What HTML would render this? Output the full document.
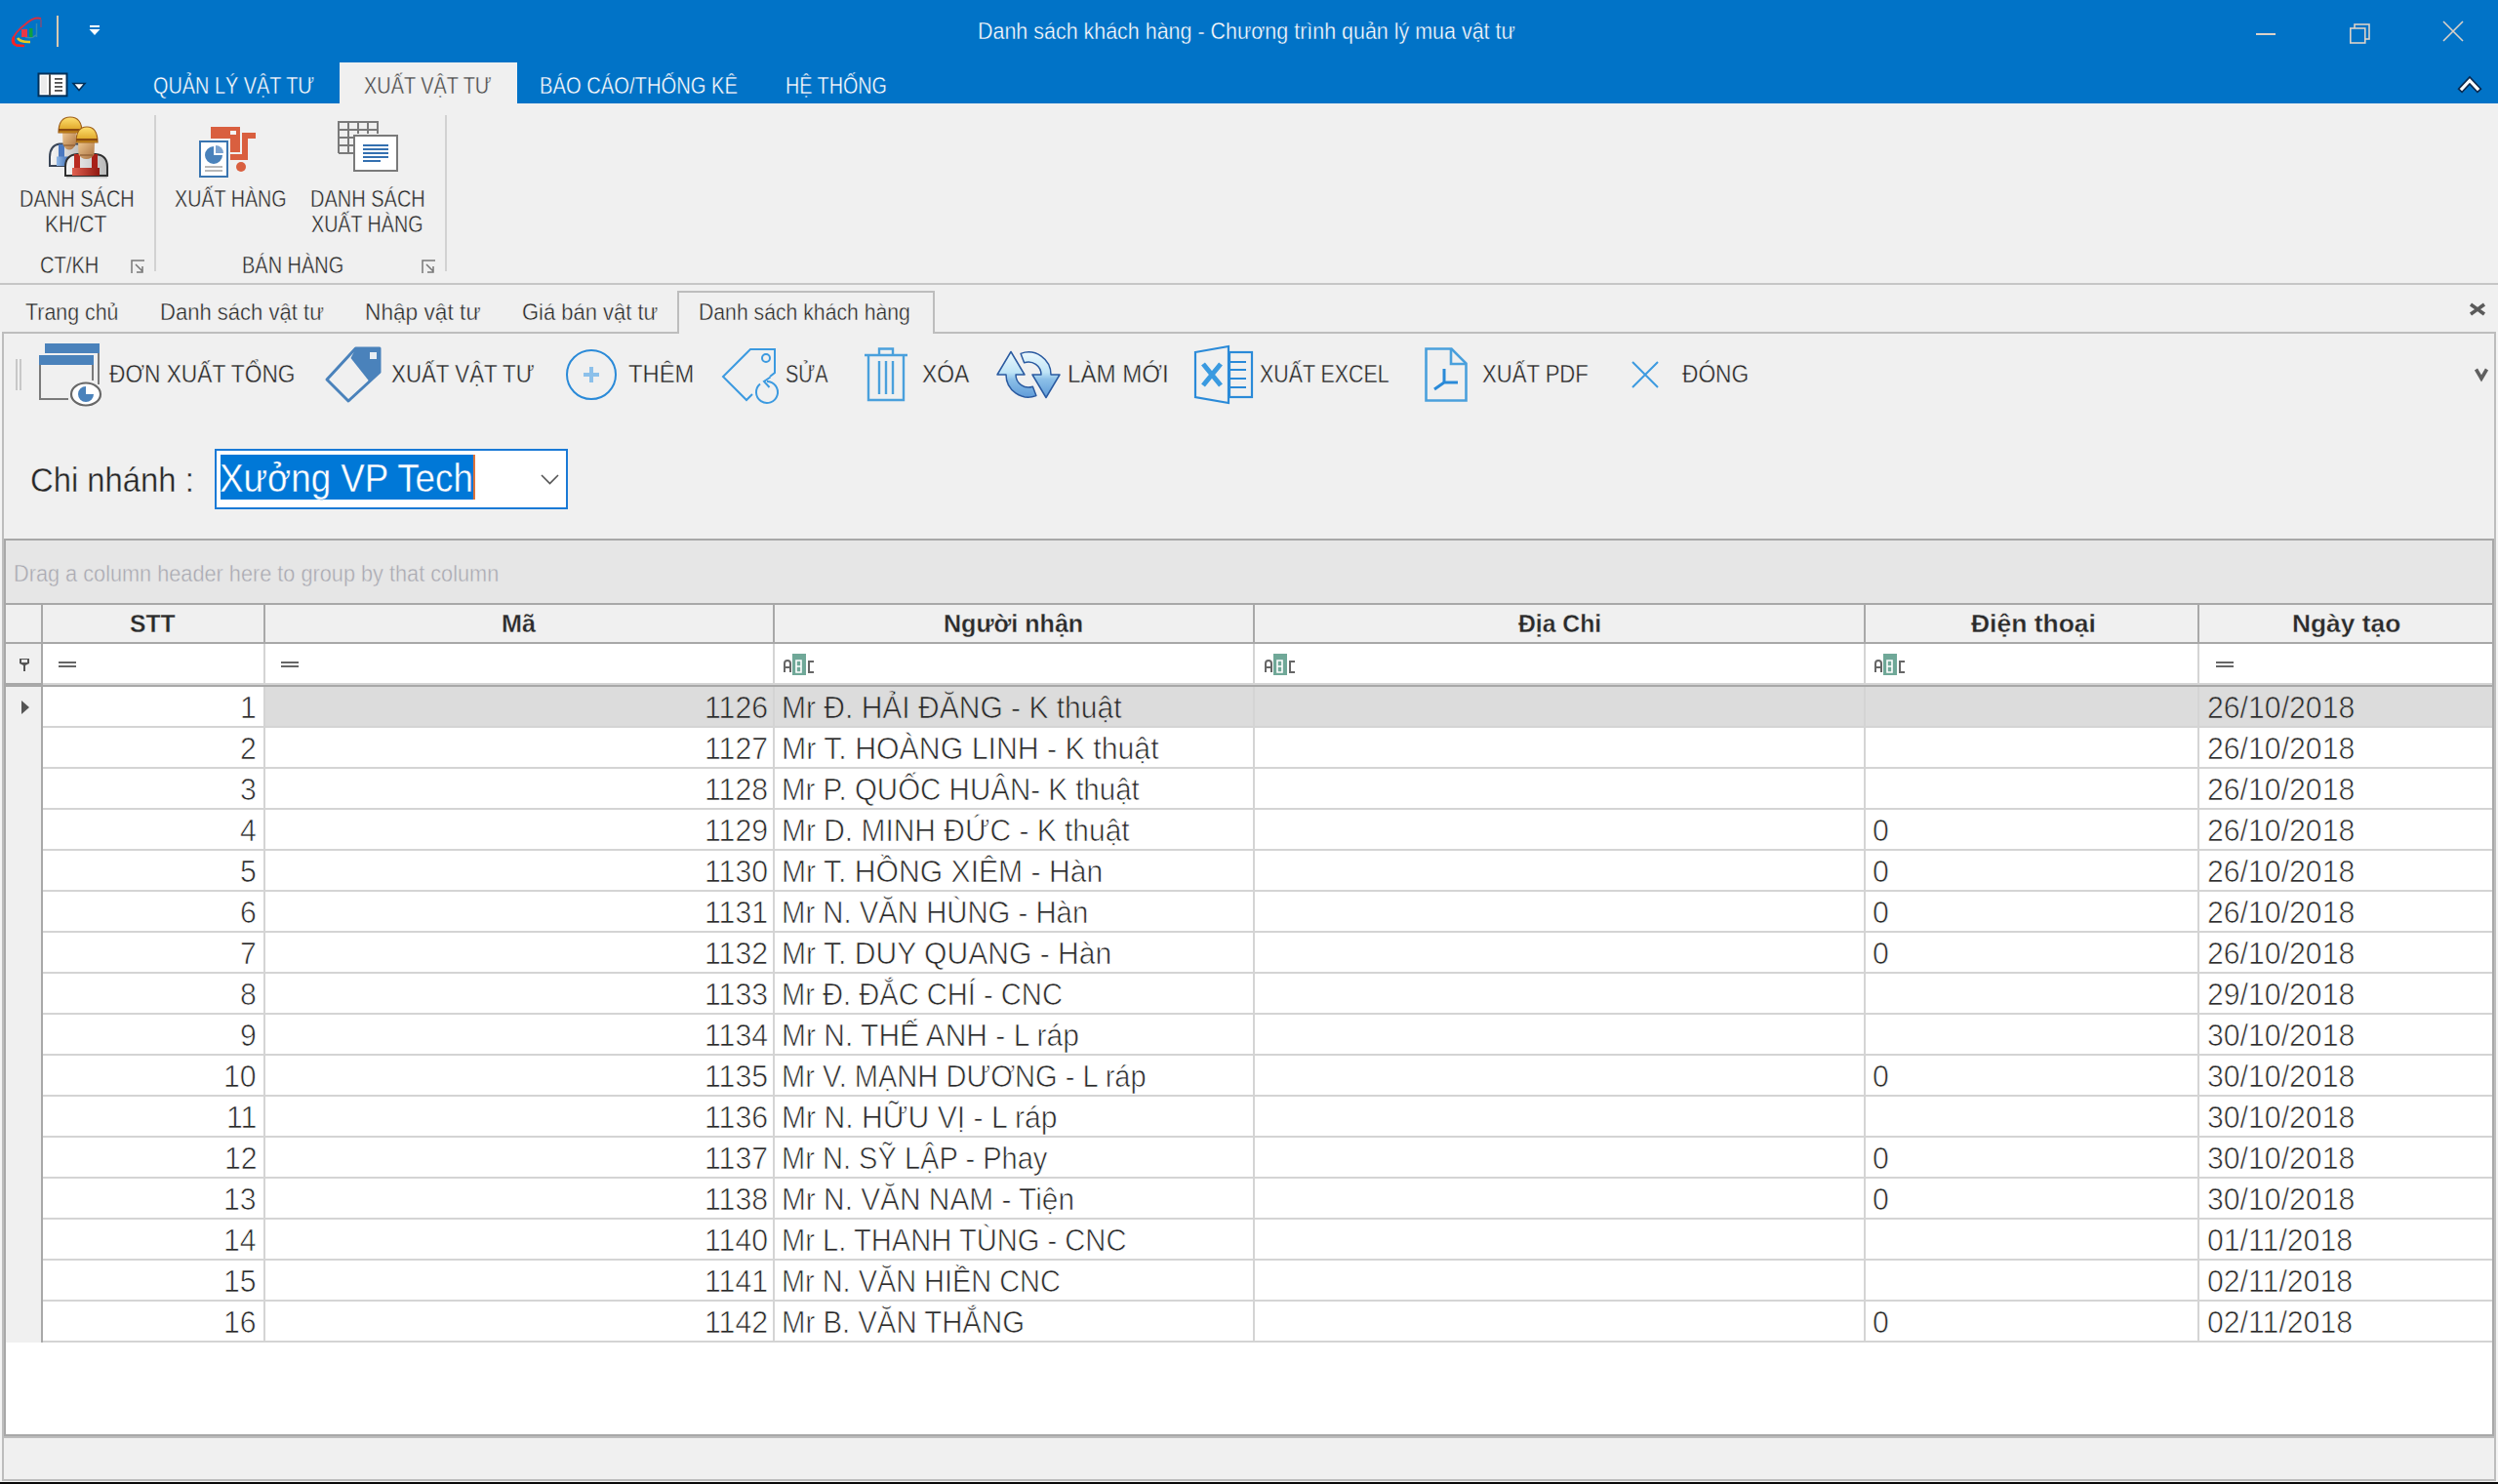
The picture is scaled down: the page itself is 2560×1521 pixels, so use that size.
<!DOCTYPE html>
<html><head><meta charset="utf-8"><title>Danh sách khách hàng</title>
<style>
html,body{margin:0;padding:0;}
body{width:2560px;height:1521px;overflow:hidden;position:relative;background:#f0f0f0;font-family:"Liberation Sans",sans-serif;}
.tx{position:absolute;white-space:pre;transform-origin:0 0;font-family:"Liberation Sans",sans-serif;}
svg{position:absolute;overflow:visible;}
</style></head><body>
<svg width="2560" height="1521" viewBox="0 0 2560 1521" style="left:0;top:0">
<g shape-rendering="crispEdges">
<!-- title bar -->
<rect x="0" y="0" width="2560" height="106" fill="#0173c7"/>
<rect x="348" y="64" width="182" height="42" fill="#f0f0f0"/>
<rect x="58" y="16" width="2" height="32" fill="#d9c9b0"/>
<!-- ribbon -->
<rect x="0" y="290" width="2560" height="2" fill="#c6c6c6"/>
<rect x="158" y="118" width="2" height="160" fill="#d2d2d2"/>
<rect x="456" y="118" width="2" height="160" fill="#d2d2d2"/>
<!-- doc tabs -->
<rect x="694" y="298" width="264" height="2" fill="#bdbdbd"/>
<rect x="694" y="298" width="2" height="44" fill="#bdbdbd"/>
<rect x="956" y="298" width="2" height="44" fill="#bdbdbd"/>
<rect x="2" y="340" width="694" height="2" fill="#bdbdbd"/>
<rect x="956" y="340" width="1602" height="2" fill="#bdbdbd"/>
<rect x="2" y="340" width="2" height="1178" fill="#bdbdbd"/>
<rect x="2556" y="340" width="2" height="1178" fill="#bdbdbd"/>
<rect x="2" y="1516" width="2556" height="2" fill="#bdbdbd"/>
<rect x="0" y="340" width="2" height="1179" fill="#f4f4f4"/>
<rect x="2558" y="340" width="2" height="1179" fill="#f4f4f4"/>
<rect x="0" y="1518" width="2560" height="1" fill="#f4f4f4"/>
<rect x="0" y="1519" width="2560" height="2" fill="#0a0a0a"/>
<!-- toolbar grip -->
<rect x="16" y="368" width="2" height="32" fill="#c8c8c8"/>
<rect x="20" y="368" width="2" height="32" fill="#c8c8c8"/>
<!-- combo -->
<rect x="220" y="460" width="362" height="62" fill="#1a7ad6"/>
<rect x="222" y="462" width="358" height="58" fill="#ffffff"/>
<rect x="226" y="466" width="259" height="46" fill="#0078d7"/>
<rect x="485" y="466" width="2" height="46" fill="#e0743a"/>
<!-- grid -->
<rect x="4" y="552" width="2552" height="921" fill="#a8a8a8"/>
<rect x="4" y="1472" width="2552" height="2" fill="#bcbcbc"/>
<rect x="6" y="554" width="2548" height="64" fill="#e6e6e6"/>
<rect x="6" y="620" width="2548" height="38" fill="#f0f0f0"/>
<rect x="6" y="660" width="2548" height="40" fill="#ffffff"/>
<rect x="6" y="660" width="36" height="40" fill="#f0f0f0"/>
<rect x="6" y="700" width="2548" height="2" fill="#d4d4d4"/>
<rect x="6" y="704" width="2548" height="766" fill="#ffffff"/>
<rect x="6" y="704" width="36" height="672" fill="#f0f0f0"/>
<rect x="272" y="704" width="2282" height="40" fill="#dcdcdc"/>
<rect x="44" y="704" width="226" height="40" fill="#ffffff"/>
<rect x="44" y="744" width="2510" height="2" fill="#d4d4d4"/>
<rect x="44" y="786" width="2510" height="2" fill="#d4d4d4"/>
<rect x="44" y="828" width="2510" height="2" fill="#d4d4d4"/>
<rect x="44" y="870" width="2510" height="2" fill="#d4d4d4"/>
<rect x="44" y="912" width="2510" height="2" fill="#d4d4d4"/>
<rect x="44" y="954" width="2510" height="2" fill="#d4d4d4"/>
<rect x="44" y="996" width="2510" height="2" fill="#d4d4d4"/>
<rect x="44" y="1038" width="2510" height="2" fill="#d4d4d4"/>
<rect x="44" y="1080" width="2510" height="2" fill="#d4d4d4"/>
<rect x="44" y="1122" width="2510" height="2" fill="#d4d4d4"/>
<rect x="44" y="1164" width="2510" height="2" fill="#d4d4d4"/>
<rect x="44" y="1206" width="2510" height="2" fill="#d4d4d4"/>
<rect x="44" y="1248" width="2510" height="2" fill="#d4d4d4"/>
<rect x="44" y="1290" width="2510" height="2" fill="#d4d4d4"/>
<rect x="44" y="1332" width="2510" height="2" fill="#d4d4d4"/>
<rect x="44" y="1374" width="2510" height="2" fill="#d4d4d4"/>
<rect x="42" y="620" width="2" height="756" fill="#a8a8a8"/>
<rect x="6" y="700" width="38" height="4" fill="#a8a8a8"/>
<rect x="44" y="702" width="2510" height="2" fill="#a8a8a8"/>
<rect x="270" y="620" width="2" height="38" fill="#a8a8a8"/>
<rect x="270" y="660" width="2" height="40" fill="#d4d4d4"/>
<rect x="270" y="704" width="2" height="672" fill="#d4d4d4"/>
<rect x="792" y="620" width="2" height="38" fill="#a8a8a8"/>
<rect x="792" y="660" width="2" height="40" fill="#d4d4d4"/>
<rect x="792" y="704" width="2" height="672" fill="#d4d4d4"/>
<rect x="1284" y="620" width="2" height="38" fill="#a8a8a8"/>
<rect x="1284" y="660" width="2" height="40" fill="#d4d4d4"/>
<rect x="1284" y="704" width="2" height="672" fill="#d4d4d4"/>
<rect x="1910" y="620" width="2" height="38" fill="#a8a8a8"/>
<rect x="1910" y="660" width="2" height="40" fill="#d4d4d4"/>
<rect x="1910" y="704" width="2" height="672" fill="#d4d4d4"/>
<rect x="2252" y="620" width="2" height="38" fill="#a8a8a8"/>
<rect x="2252" y="660" width="2" height="40" fill="#d4d4d4"/>
<rect x="2252" y="704" width="2" height="672" fill="#d4d4d4"/>
</g>
<!-- window controls -->
<rect x="2312" y="34" width="20" height="2" fill="#dcd2c8"/>
<rect x="2413" y="25" width="15" height="15" fill="none" stroke="#dcd2c8" stroke-width="1.6"/>
<rect x="2408.8" y="29" width="15" height="15" fill="#0173c7" stroke="#dcd2c8" stroke-width="1.6"/>
<path d="M2504,22 L2524,42 M2524,22 L2504,42" stroke="#dcd2c8" stroke-width="1.6"/>
<path d="M2523,91 L2531,82.5 L2539,91" fill="none" stroke="#0a2a50" stroke-width="6.5" stroke-linecap="square"/>
<path d="M2523,91 L2531,82.5 L2539,91" fill="none" stroke="#ffffff" stroke-width="3.2" stroke-linecap="square"/>
<!-- logo -->
<path d="M42,19 Q35,17 27,24 Q14,34 12.5,42 Q13,47.5 24,47" fill="none" stroke="#d83040" stroke-width="2"/>
<path d="M14,38 Q12.5,45 17,46.5 L25,47" fill="none" stroke="#ff2020" stroke-width="2.6"/>
<path d="M42,20 L42,28" stroke="#b04060" stroke-width="1.5" opacity="0.7"/>
<path d="M37.5,24 L37.5,38 M26,38 Q33,40 37,36" fill="none" stroke="#5a9aa0" stroke-width="1.5" opacity="0.6"/>
<rect x="22" y="30" width="6" height="8" fill="#e83848"/>
<rect x="30" y="29" width="3.5" height="9" fill="#10a040"/>
<path d="M18,39 Q21,43.5 31,43" fill="none" stroke="#e8c820" stroke-width="2.6"/>
<!-- QAT dropdown -->
<rect x="92" y="26" width="10" height="2" fill="#ffffff"/>
<path d="M91.5,30 L102.5,30 L97,36 Z" fill="#ffffff"/>
<!-- app menu icon -->
<rect x="39.5" y="75.5" width="29" height="22.8" fill="#ffffff" stroke="#00305a" stroke-width="2"/>
<rect x="42" y="78" width="6" height="18" fill="#ebebeb"/>
<rect x="50" y="76" width="2" height="22" fill="#505050"/>
<rect x="56" y="80" width="8" height="1.8" fill="#505050"/>
<rect x="56" y="84" width="8" height="1.8" fill="#505050"/>
<rect x="56" y="88" width="8" height="1.8" fill="#505050"/>
<rect x="56" y="92" width="8" height="1.8" fill="#505050"/>
<path d="M75,85.5 L87,85.5 L81,92.5 Z" fill="#ffffff" stroke="#00305a" stroke-width="1.6"/>
<!-- dialog launchers -->
<g fill="none" stroke="#777" stroke-width="1.5">
<path d="M135,280 L135,267 L148,267"/><path d="M139,271 L146,278 M146,273 L146,279 L140,279"/>
<path d="M433,280 L433,267 L446,267"/><path d="M437,271 L444,278 M444,273 L444,279 L438,279"/>
</g>
<!-- doc close X -->
<path d="M2532,312 L2546,322 M2546,312 L2532,322" stroke="#5a5a5a" stroke-width="3.6"/>
<!-- toolbar chevron -->
<path d="M2537.5,378.5 L2543,388 L2548.5,378.5" fill="none" stroke="#606060" stroke-width="3.6"/>
<!-- combo chevron -->
<path d="M555,487 L563.5,495.5 L572,487" fill="none" stroke="#555" stroke-width="1.6"/>
<!-- workers icon -->
<defs>
<linearGradient id="helm" x1="0" y1="0" x2="0" y2="1"><stop offset="0" stop-color="#ffe070"/><stop offset="1" stop-color="#d89a18"/></linearGradient>
<linearGradient id="face" x1="0" y1="0" x2="1" y2="1"><stop offset="0" stop-color="#f0c890"/><stop offset="1" stop-color="#a87040"/></linearGradient>
<linearGradient id="shirt" x1="0" y1="0" x2="1" y2="0"><stop offset="0" stop-color="#f8f8f8"/><stop offset="1" stop-color="#b8b8b8"/></linearGradient>
<linearGradient id="red" x1="0" y1="0" x2="1" y2="0"><stop offset="0" stop-color="#e06050"/><stop offset="1" stop-color="#901810"/></linearGradient>
<linearGradient id="blu" x1="0" y1="0" x2="1" y2="0"><stop offset="0" stop-color="#90b8e8"/><stop offset="1" stop-color="#3060a8"/></linearGradient>
<linearGradient id="rfa" x1="0" y1="0" x2="0" y2="1"><stop offset="0" stop-color="#e8f8fc"/><stop offset="0.5" stop-color="#b8e0f4"/><stop offset="1" stop-color="#6aa4dc"/></linearGradient>
</defs>
<g>
<path d="M51,170 L51,161 Q51,149 61,147.5 L80,147.5 Q84,149 84,156 L84,170 Z" fill="url(#shirt)" stroke="#3a4658" stroke-width="2"/>
<rect x="60" y="148" width="6" height="13" fill="#4a78c0"/>
<rect x="58" y="160.5" width="15" height="9.5" fill="url(#blu)"/>
<path d="M64,135 L78,135 L77.5,148 Q75,153.5 71,153.5 Q67,153.5 64.5,148 Z" fill="url(#face)"/>
<rect x="65" y="148" width="12" height="2" fill="#8a5a30" opacity="0.6"/>
<path d="M60,136 Q60,120 72,120 Q84,120 84,136 Z" fill="url(#helm)" stroke="#a06018" stroke-width="1.2"/>
<rect x="60" y="132" width="24" height="2.5" fill="#8a4a10"/>
<path d="M67,180 L67,171 Q67,159 79,158 L98,158 Q110,159 110,171 L110,180 Z" fill="url(#shirt)" stroke="#303030" stroke-width="2"/>
<rect x="76" y="158" width="6" height="14" fill="#b82a20"/>
<rect x="94" y="158" width="6" height="14" fill="#a82018"/>
<rect x="74" y="172" width="28" height="8" fill="url(#red)"/>
<path d="M80,145 L97,145 L96.5,158 Q94,163 88.5,163 Q83,163 80.5,158 Z" fill="url(#face)"/>
<rect x="82" y="158" width="13" height="2" fill="#8a5a30" opacity="0.6"/>
<path d="M78,146 Q78,130 89,130 Q100,130 100,146 Z" fill="url(#helm)" stroke="#a06018" stroke-width="1.2"/>
<rect x="78" y="142" width="22" height="2.5" fill="#8a4a10"/>
<rect x="68" y="181" width="42" height="1.5" fill="#c8c8c8"/>
</g>
<!-- xuat hang icon -->
<g fill="#d95f3f">
<path d="M216,130 L246,130 L246,156 L236,156 L236,142 L216,142 Z"/>
<path d="M248,136 L262,136 L262,142 L254,142 L254,164 L236,164 L236,158 L248,158 Z"/>
<circle cx="247" cy="171" r="5"/>
</g>
<rect x="236" y="134" width="6" height="4" fill="#f4f4f4"/>
<rect x="205" y="145" width="28" height="36" fill="#ffffff" stroke="#3a75b0" stroke-width="2"/>
<path d="M219,150 L219,159 L228,159 A9,9 0 1 1 219,150 Z" fill="#4a82bb"/>
<path d="M221,149 L221,157 L229,157 A8,8 0 0 0 221,149 Z" fill="#7ba3d0"/>
<rect x="210" y="170" width="18" height="2" fill="#b8b8b8"/>
<rect x="210" y="174" width="18" height="2" fill="#b8b8b8"/>
<!-- danh sach xuat hang icon -->
<g fill="none" stroke="#7a7a7a" stroke-width="2">
<path d="M347,157 L347,125 L387,125 L387,137 M357,125 L357,157 M367,125 L367,137 M377,125 L377,137 M347,133 L387,133 M347,141 L362,141 M347,149 L362,149 M347,157 L362,157"/>
</g>
<rect x="363" y="139" width="44" height="36" fill="#ffffff" stroke="#7a7a7a" stroke-width="2"/>
<g fill="#3470b0">
<rect x="372" y="148" width="26" height="2"/><rect x="372" y="152" width="26" height="2"/><rect x="372" y="156" width="26" height="2"/><rect x="372" y="160" width="26" height="2"/><rect x="372" y="164" width="18" height="2"/>
</g>
<!-- don xuat tong icon -->
<rect x="46" y="352" width="56" height="10" fill="#4a82bb"/>
<rect x="100" y="362" width="2" height="32" fill="#7a7a7a"/>
<rect x="40" y="364" width="56" height="10" fill="#4a82bb"/>
<path d="M41,374 L41,409 L70,409 M95,374 L95,390" fill="none" stroke="#7a7a7a" stroke-width="2"/>
<ellipse cx="88" cy="404" rx="15" ry="11.5" fill="#ffffff" stroke="#686868" stroke-width="2.2"/>
<path d="M88,396 L88,404 L96,404 A8,8 0 1 1 88,396 Z" fill="#4a82bb"/>
<!-- tag icon (xuat vat tu) -->
<path d="M364.5,357 L389,357 L389,381.5 L357,411 L335,389 Z" fill="none" stroke="#4a82bb" stroke-width="3" stroke-linejoin="round"/>
<path d="M364.5,357 L389,357 L389,381.5 L378.5,391 L359.5,367 Z" fill="#4a82bb"/>
<rect x="379" y="361" width="7" height="7" fill="#e8eef4"/>
<!-- them icon -->
<circle cx="606" cy="384" r="25" fill="none" stroke="#2a8ad8" stroke-width="2"/>
<rect x="598" y="382" width="16" height="4" fill="#8cc0ea"/>
<rect x="604" y="376" width="4" height="16" fill="#8cc0ea"/>
<!-- sua icon -->
<g fill="none" stroke="#3c9ae0" stroke-width="2">
<path d="M789,386 L794,382 L794,358 L769,358 L741,386 L765,410 L771,404"/>
<circle cx="785" cy="367" r="4"/>
<path d="M786,391 A11,11 0 1 1 779,393.5"/>
<path d="M789.5,386.5 L783,391 L788.5,397"/>
</g>
<!-- trash icon -->
<g fill="none" stroke="#4aa0dc" stroke-width="2.4">
<path d="M886,364 L930,364"/>
<path d="M901,363 L901,357.5 L915,357.5 L915,363"/>
<path d="M890,365 L890,410 L926,410 L926,365"/>
<path d="M901,370 L901,404 M908,370 L908,404 M915,370 L915,404"/>
</g>
<!-- refresh icon -->
<linearGradient id="rfb" gradientUnits="userSpaceOnUse" x1="0" y1="360" x2="0" y2="408"><stop offset="0" stop-color="#eefafe"/><stop offset="0.45" stop-color="#bfe4f6"/><stop offset="0.6" stop-color="#8cc0e8"/><stop offset="1" stop-color="#5e9ad8"/></linearGradient>
<g stroke="#2a5aa0" stroke-width="1.5" stroke-linejoin="round" fill="url(#rfb)">
<path d="M1036,360.5 L1050,384 L1041,384 A13,13 0 0 0 1058.4,396.2 L1061.9,405.6 A23,23 0 0 1 1031,384 L1022,384 Z"/>
<path d="M1072,407.5 L1058,384 L1067,384 A13,13 0 0 0 1049.6,371.8 L1046.1,362.4 A23,23 0 0 1 1077,384 L1086,384 Z"/>
</g>
<!-- excel icon -->
<g fill="none" stroke="#2a8ad8" stroke-width="2.2">
<path d="M1225,361 L1259,355 L1259,413 L1225,407 Z"/>
<rect x="1260" y="361" width="23" height="46"/>
<path d="M1260,371 L1277,371 M1260,379 L1277,379 M1260,388 L1277,388 M1260,397 L1277,397"/>
</g>
<path d="M1233,373 L1251,395 M1251,373 L1233,395" stroke="#3a9ae0" stroke-width="5"/>
<!-- pdf icon -->
<g fill="none" stroke="#4aa0dc" stroke-width="2.6">
<path d="M1461.5,357.5 L1487.5,357.5 L1502.5,372.5 L1502.5,410.5 L1461.5,410.5 Z"/>
<path d="M1487,358 L1487,373 L1502,373"/>
</g>
<g fill="none" stroke="#2a8ad8" stroke-width="3">
<path d="M1480,378 L1480,392 L1494,392 M1480,392 L1470,399"/>
</g>
<!-- dong X -->
<path d="M1673,371 L1699,397 M1699,371 L1673,397" stroke="#3c9ae0" stroke-width="2"/>
<!-- filter row icons -->
<g fill="#666">
<rect x="60" y="678" width="18" height="2"/><rect x="60" y="682" width="18" height="2"/>
<rect x="288" y="678" width="18" height="2"/><rect x="288" y="682" width="18" height="2"/>
<rect x="2271" y="678" width="18" height="2"/><rect x="2271" y="682" width="18" height="2"/>
</g>
<g transform="translate(803,670)">
<path d="M1,19 L1,10 Q1,7 4,7 Q7,7 7,10 L7,19 M1,14 L7,14" fill="none" stroke="#666" stroke-width="2"/>
<rect x="9" y="0" width="14" height="22" fill="#70a898"/>
<path d="M13,7 L18,7 L18,13 L13,13 Z M13,13 L18,13 L18,19 L13,19 Z" fill="none" stroke="#ffffff" stroke-width="1.6"/>
<path d="M31,8 L26,8 L26,19 L31,19" fill="none" stroke="#666" stroke-width="2"/>
</g>
<g transform="translate(1296,670)">
<path d="M1,19 L1,10 Q1,7 4,7 Q7,7 7,10 L7,19 M1,14 L7,14" fill="none" stroke="#666" stroke-width="2"/>
<rect x="9" y="0" width="14" height="22" fill="#70a898"/>
<path d="M13,7 L18,7 L18,13 L13,13 Z M13,13 L18,13 L18,19 L13,19 Z" fill="none" stroke="#ffffff" stroke-width="1.6"/>
<path d="M31,8 L26,8 L26,19 L31,19" fill="none" stroke="#666" stroke-width="2"/>
</g>
<g transform="translate(1921,670)">
<path d="M1,19 L1,10 Q1,7 4,7 Q7,7 7,10 L7,19 M1,14 L7,14" fill="none" stroke="#666" stroke-width="2"/>
<rect x="9" y="0" width="14" height="22" fill="#70a898"/>
<path d="M13,7 L18,7 L18,13 L13,13 Z M13,13 L18,13 L18,19 L13,19 Z" fill="none" stroke="#ffffff" stroke-width="1.6"/>
<path d="M31,8 L26,8 L26,19 L31,19" fill="none" stroke="#666" stroke-width="2"/>
</g>
<!-- filter pin -->
<path d="M20,675 L30,675 L30,680 L26,682 L26,688 L24,688 L24,682 L20,680 Z" fill="#555"/>
<rect x="22" y="676" width="6" height="3" fill="#e8e8e8"/>
<!-- row indicator -->
<path d="M22,718 L30,725 L22,732 Z" fill="#555"/>

</svg>

<div class='tx' style='left:1002.15px;top:21px;font-size:23.25px;line-height:23.25px;font-weight:normal;color:#ffffff;-webkit-text-stroke:0.4px #0173c7;transform:scaleX(0.9227)'>Danh sách khách hàng - Chương trình quản lý mua vật tư</div>
<div class='tx' style='left:157.15px;top:77px;font-size:23.25px;line-height:23.25px;font-weight:normal;color:#ffffff;-webkit-text-stroke:0.4px #0173c7;transform:scaleX(0.8542)'>QUẢN LÝ VẬT TƯ</div>
<div class='tx' style='left:373.14px;top:77px;font-size:23.25px;line-height:23.25px;font-weight:normal;color:#444444;-webkit-text-stroke:0.4px #f0f0f0;transform:scaleX(0.8556)'>XUẤT VẬT TƯ</div>
<div class='tx' style='left:553.26px;top:77px;font-size:23.25px;line-height:23.25px;font-weight:normal;color:#ffffff;-webkit-text-stroke:0.4px #0173c7;transform:scaleX(0.8684)'>BÁO CÁO/THỐNG KÊ</div>
<div class='tx' style='left:805.30px;top:77px;font-size:23.25px;line-height:23.25px;font-weight:normal;color:#ffffff;-webkit-text-stroke:0.4px #0173c7;transform:scaleX(0.8504)'>HỆ THỐNG</div>
<div class='tx' style='left:19.78px;top:193px;font-size:23.25px;line-height:23.25px;font-weight:normal;color:#262626;-webkit-text-stroke:0.4px #f0f0f0;transform:scaleX(0.8604)'>DANH SÁCH</div>
<div class='tx' style='left:46.18px;top:219px;font-size:23.25px;line-height:23.25px;font-weight:normal;color:#262626;-webkit-text-stroke:0.4px #f0f0f0;transform:scaleX(0.9088)'>KH/CT</div>
<div class='tx' style='left:178.85px;top:193px;font-size:23.25px;line-height:23.25px;font-weight:normal;color:#262626;-webkit-text-stroke:0.4px #f0f0f0;transform:scaleX(0.8481)'>XUẤT HÀNG</div>
<div class='tx' style='left:317.68px;top:193px;font-size:23.25px;line-height:23.25px;font-weight:normal;color:#262626;-webkit-text-stroke:0.4px #f0f0f0;transform:scaleX(0.8604)'>DANH SÁCH</div>
<div class='tx' style='left:318.55px;top:219px;font-size:23.25px;line-height:23.25px;font-weight:normal;color:#262626;-webkit-text-stroke:0.4px #f0f0f0;transform:scaleX(0.8466)'>XUẤT HÀNG</div>
<div class='tx' style='left:41.13px;top:261px;font-size:23.25px;line-height:23.25px;font-weight:normal;color:#262626;-webkit-text-stroke:0.4px #f0f0f0;transform:scaleX(0.8657)'>CT/KH</div>
<div class='tx' style='left:247.68px;top:261px;font-size:23.25px;line-height:23.25px;font-weight:normal;color:#262626;-webkit-text-stroke:0.4px #f0f0f0;transform:scaleX(0.8585)'>BÁN HÀNG</div>
<div class='tx' style='left:26.00px;top:309px;font-size:23.25px;line-height:23.25px;font-weight:normal;color:#262626;-webkit-text-stroke:0.4px #f0f0f0;transform:scaleX(0.9194)'>Trang chủ</div>
<div class='tx' style='left:163.70px;top:309px;font-size:23.25px;line-height:23.25px;font-weight:normal;color:#262626;-webkit-text-stroke:0.4px #f0f0f0;transform:scaleX(0.9480)'>Danh sách vật tư</div>
<div class='tx' style='left:373.65px;top:309px;font-size:23.25px;line-height:23.25px;font-weight:normal;color:#262626;-webkit-text-stroke:0.4px #f0f0f0;transform:scaleX(0.9756)'>Nhập vật tư</div>
<div class='tx' style='left:534.75px;top:309px;font-size:23.25px;line-height:23.25px;font-weight:normal;color:#262626;-webkit-text-stroke:0.4px #f0f0f0;transform:scaleX(0.9452)'>Giá bán vật tư</div>
<div class='tx' style='left:715.88px;top:309px;font-size:23.25px;line-height:23.25px;font-weight:normal;color:#262626;-webkit-text-stroke:0.4px #f0f0f0;transform:scaleX(0.9119)'>Danh sách khách hàng</div>
<div class='tx' style='left:112.40px;top:370px;font-size:26.25px;line-height:26.25px;font-weight:normal;color:#262626;-webkit-text-stroke:0.4px #f0f0f0;transform:scaleX(0.8665)'>ĐƠN XUẤT TỔNG</div>
<div class='tx' style='left:401.15px;top:370px;font-size:26.25px;line-height:26.25px;font-weight:normal;color:#262626;-webkit-text-stroke:0.4px #f0f0f0;transform:scaleX(0.8497)'>XUẤT VẬT TƯ</div>
<div class='tx' style='left:644.00px;top:370px;font-size:26.25px;line-height:26.25px;font-weight:normal;color:#262626;-webkit-text-stroke:0.4px #f0f0f0;transform:scaleX(0.9041)'>THÊM</div>
<div class='tx' style='left:805.24px;top:370px;font-size:26.25px;line-height:26.25px;font-weight:normal;color:#262626;-webkit-text-stroke:0.4px #f0f0f0;transform:scaleX(0.7596)'>SỬA</div>
<div class='tx' style='left:944.93px;top:370px;font-size:26.25px;line-height:26.25px;font-weight:normal;color:#262626;-webkit-text-stroke:0.4px #f0f0f0;transform:scaleX(0.8727)'>XÓA</div>
<div class='tx' style='left:1093.77px;top:370px;font-size:26.25px;line-height:26.25px;font-weight:normal;color:#262626;-webkit-text-stroke:0.4px #f0f0f0;transform:scaleX(0.9174)'>LÀM MỚI</div>
<div class='tx' style='left:1291.19px;top:370px;font-size:26.25px;line-height:26.25px;font-weight:normal;color:#262626;-webkit-text-stroke:0.4px #f0f0f0;transform:scaleX(0.8137)'>XUẤT EXCEL</div>
<div class='tx' style='left:1519.16px;top:370px;font-size:26.25px;line-height:26.25px;font-weight:normal;color:#262626;-webkit-text-stroke:0.4px #f0f0f0;transform:scaleX(0.8414)'>XUẤT PDF</div>
<div class='tx' style='left:1724.40px;top:370px;font-size:26.25px;line-height:26.25px;font-weight:normal;color:#262626;-webkit-text-stroke:0.4px #f0f0f0;transform:scaleX(0.8649)'>ĐÓNG</div>
<div class='tx' style='left:31.06px;top:474px;font-size:35.0px;line-height:35.0px;font-weight:normal;color:#262626;-webkit-text-stroke:0.4px #f0f0f0;transform:scaleX(0.9371)'>Chi nhánh :</div>
<div class='tx' style='left:225.10px;top:470px;font-size:40.75px;line-height:40.75px;font-weight:normal;color:#ffffff;-webkit-text-stroke:0.4px #0078d7;transform:scaleX(0.9018)'>Xưởng VP Tech</div>
<div class='tx' style='left:14.13px;top:577px;font-size:23.25px;line-height:23.25px;font-weight:normal;color:#a8a8b0;-webkit-text-stroke:0.4px #e6e6e6;transform:scaleX(0.9338)'>Drag a column header here to group by that column</div>
<div class='tx' style='left:133.06px;top:626px;font-size:26.25px;line-height:26.25px;font-weight:bold;color:#2a2a2a;-webkit-text-stroke:0.3px #f0f0f0;transform:scaleX(0.9388)'>STT</div>
<div class='tx' style='left:514.04px;top:626px;font-size:26.25px;line-height:26.25px;font-weight:bold;color:#2a2a2a;-webkit-text-stroke:0.3px #f0f0f0;transform:scaleX(0.9583)'>Mã</div>
<div class='tx' style='left:967.05px;top:626px;font-size:26.25px;line-height:26.25px;font-weight:bold;color:#2a2a2a;-webkit-text-stroke:0.3px #f0f0f0;transform:scaleX(0.9547)'>Người nhận</div>
<div class='tx' style='left:1556.40px;top:626px;font-size:26.25px;line-height:26.25px;font-weight:bold;color:#2a2a2a;-webkit-text-stroke:0.3px #f0f0f0;transform:scaleX(0.9416)'>Địa Chi</div>
<div class='tx' style='left:2020.00px;top:626px;font-size:26.25px;line-height:26.25px;font-weight:bold;color:#2a2a2a;-webkit-text-stroke:0.3px #f0f0f0;transform:scaleX(1.0080)'>Điện thoại</div>
<div class='tx' style='left:2349.30px;top:626px;font-size:26.25px;line-height:26.25px;font-weight:bold;color:#2a2a2a;-webkit-text-stroke:0.3px #f0f0f0;transform:scaleX(1.0037)'>Ngày tạo</div>
<div class='tx' style='left:245.94px;top:709px;font-size:32.0px;line-height:32.0px;font-weight:normal;color:#2a2a2a;-webkit-text-stroke:0.7px #ffffff;transform:scaleX(0.9446)'>1</div>
<div class='tx' style='left:721.77px;top:709px;font-size:32.0px;line-height:32.0px;font-weight:normal;color:#2a2a2a;-webkit-text-stroke:0.7px #dcdcdc;transform:scaleX(0.9446)'>1126</div>
<div class='tx' style='left:801.12px;top:709px;font-size:32.0px;line-height:32.0px;font-weight:normal;color:#2a2a2a;-webkit-text-stroke:0.7px #dcdcdc;transform:scaleX(0.9378)'>Mr Đ. HẢI ĐĂNG - K thuật</div>
<div class='tx' style='left:2262.26px;top:709px;font-size:32.0px;line-height:32.0px;font-weight:normal;color:#2a2a2a;-webkit-text-stroke:0.7px #dcdcdc;transform:scaleX(0.9446)'>26/10/2018</div>
<div class='tx' style='left:245.94px;top:751px;font-size:32.0px;line-height:32.0px;font-weight:normal;color:#2a2a2a;-webkit-text-stroke:0.7px #ffffff;transform:scaleX(0.9446)'>2</div>
<div class='tx' style='left:721.77px;top:751px;font-size:32.0px;line-height:32.0px;font-weight:normal;color:#2a2a2a;-webkit-text-stroke:0.7px #ffffff;transform:scaleX(0.9446)'>1127</div>
<div class='tx' style='left:801.11px;top:751px;font-size:32.0px;line-height:32.0px;font-weight:normal;color:#2a2a2a;-webkit-text-stroke:0.7px #ffffff;transform:scaleX(0.9467)'>Mr T. HOÀNG LINH - K thuật</div>
<div class='tx' style='left:2262.26px;top:751px;font-size:32.0px;line-height:32.0px;font-weight:normal;color:#2a2a2a;-webkit-text-stroke:0.7px #ffffff;transform:scaleX(0.9446)'>26/10/2018</div>
<div class='tx' style='left:245.94px;top:793px;font-size:32.0px;line-height:32.0px;font-weight:normal;color:#2a2a2a;-webkit-text-stroke:0.7px #ffffff;transform:scaleX(0.9446)'>3</div>
<div class='tx' style='left:721.77px;top:793px;font-size:32.0px;line-height:32.0px;font-weight:normal;color:#2a2a2a;-webkit-text-stroke:0.7px #ffffff;transform:scaleX(0.9446)'>1128</div>
<div class='tx' style='left:801.16px;top:793px;font-size:32.0px;line-height:32.0px;font-weight:normal;color:#2a2a2a;-webkit-text-stroke:0.7px #ffffff;transform:scaleX(0.9222)'>Mr P. QUỐC HUÂN- K thuật</div>
<div class='tx' style='left:2262.26px;top:793px;font-size:32.0px;line-height:32.0px;font-weight:normal;color:#2a2a2a;-webkit-text-stroke:0.7px #ffffff;transform:scaleX(0.9446)'>26/10/2018</div>
<div class='tx' style='left:245.94px;top:835px;font-size:32.0px;line-height:32.0px;font-weight:normal;color:#2a2a2a;-webkit-text-stroke:0.7px #ffffff;transform:scaleX(0.9446)'>4</div>
<div class='tx' style='left:721.77px;top:835px;font-size:32.0px;line-height:32.0px;font-weight:normal;color:#2a2a2a;-webkit-text-stroke:0.7px #ffffff;transform:scaleX(0.9446)'>1129</div>
<div class='tx' style='left:801.13px;top:835px;font-size:32.0px;line-height:32.0px;font-weight:normal;color:#2a2a2a;-webkit-text-stroke:0.7px #ffffff;transform:scaleX(0.9356)'>Mr D. MINH ĐỨC - K thuật</div>
<div class='tx' style='left:1919.06px;top:835px;font-size:32.0px;line-height:32.0px;font-weight:normal;color:#2a2a2a;-webkit-text-stroke:0.7px #ffffff;transform:scaleX(0.9446)'>0</div>
<div class='tx' style='left:2262.26px;top:835px;font-size:32.0px;line-height:32.0px;font-weight:normal;color:#2a2a2a;-webkit-text-stroke:0.7px #ffffff;transform:scaleX(0.9446)'>26/10/2018</div>
<div class='tx' style='left:245.94px;top:877px;font-size:32.0px;line-height:32.0px;font-weight:normal;color:#2a2a2a;-webkit-text-stroke:0.7px #ffffff;transform:scaleX(0.9446)'>5</div>
<div class='tx' style='left:721.77px;top:877px;font-size:32.0px;line-height:32.0px;font-weight:normal;color:#2a2a2a;-webkit-text-stroke:0.7px #ffffff;transform:scaleX(0.9446)'>1130</div>
<div class='tx' style='left:801.12px;top:877px;font-size:32.0px;line-height:32.0px;font-weight:normal;color:#2a2a2a;-webkit-text-stroke:0.7px #ffffff;transform:scaleX(0.9416)'>Mr T. HỒNG XIÊM - Hàn</div>
<div class='tx' style='left:1919.06px;top:877px;font-size:32.0px;line-height:32.0px;font-weight:normal;color:#2a2a2a;-webkit-text-stroke:0.7px #ffffff;transform:scaleX(0.9446)'>0</div>
<div class='tx' style='left:2262.26px;top:877px;font-size:32.0px;line-height:32.0px;font-weight:normal;color:#2a2a2a;-webkit-text-stroke:0.7px #ffffff;transform:scaleX(0.9446)'>26/10/2018</div>
<div class='tx' style='left:245.94px;top:919px;font-size:32.0px;line-height:32.0px;font-weight:normal;color:#2a2a2a;-webkit-text-stroke:0.7px #ffffff;transform:scaleX(0.9446)'>6</div>
<div class='tx' style='left:721.77px;top:919px;font-size:32.0px;line-height:32.0px;font-weight:normal;color:#2a2a2a;-webkit-text-stroke:0.7px #ffffff;transform:scaleX(0.9446)'>1131</div>
<div class='tx' style='left:801.17px;top:919px;font-size:32.0px;line-height:32.0px;font-weight:normal;color:#2a2a2a;-webkit-text-stroke:0.7px #ffffff;transform:scaleX(0.9156)'>Mr N. VĂN HÙNG - Hàn</div>
<div class='tx' style='left:1919.06px;top:919px;font-size:32.0px;line-height:32.0px;font-weight:normal;color:#2a2a2a;-webkit-text-stroke:0.7px #ffffff;transform:scaleX(0.9446)'>0</div>
<div class='tx' style='left:2262.26px;top:919px;font-size:32.0px;line-height:32.0px;font-weight:normal;color:#2a2a2a;-webkit-text-stroke:0.7px #ffffff;transform:scaleX(0.9446)'>26/10/2018</div>
<div class='tx' style='left:245.94px;top:961px;font-size:32.0px;line-height:32.0px;font-weight:normal;color:#2a2a2a;-webkit-text-stroke:0.7px #ffffff;transform:scaleX(0.9446)'>7</div>
<div class='tx' style='left:721.77px;top:961px;font-size:32.0px;line-height:32.0px;font-weight:normal;color:#2a2a2a;-webkit-text-stroke:0.7px #ffffff;transform:scaleX(0.9446)'>1132</div>
<div class='tx' style='left:801.12px;top:961px;font-size:32.0px;line-height:32.0px;font-weight:normal;color:#2a2a2a;-webkit-text-stroke:0.7px #ffffff;transform:scaleX(0.9404)'>Mr T. DUY QUANG - Hàn</div>
<div class='tx' style='left:1919.06px;top:961px;font-size:32.0px;line-height:32.0px;font-weight:normal;color:#2a2a2a;-webkit-text-stroke:0.7px #ffffff;transform:scaleX(0.9446)'>0</div>
<div class='tx' style='left:2262.26px;top:961px;font-size:32.0px;line-height:32.0px;font-weight:normal;color:#2a2a2a;-webkit-text-stroke:0.7px #ffffff;transform:scaleX(0.9446)'>26/10/2018</div>
<div class='tx' style='left:245.94px;top:1003px;font-size:32.0px;line-height:32.0px;font-weight:normal;color:#2a2a2a;-webkit-text-stroke:0.7px #ffffff;transform:scaleX(0.9446)'>8</div>
<div class='tx' style='left:721.77px;top:1003px;font-size:32.0px;line-height:32.0px;font-weight:normal;color:#2a2a2a;-webkit-text-stroke:0.7px #ffffff;transform:scaleX(0.9446)'>1133</div>
<div class='tx' style='left:801.18px;top:1003px;font-size:32.0px;line-height:32.0px;font-weight:normal;color:#2a2a2a;-webkit-text-stroke:0.7px #ffffff;transform:scaleX(0.9099)'>Mr Đ. ĐẮC CHÍ - CNC</div>
<div class='tx' style='left:2262.26px;top:1003px;font-size:32.0px;line-height:32.0px;font-weight:normal;color:#2a2a2a;-webkit-text-stroke:0.7px #ffffff;transform:scaleX(0.9446)'>29/10/2018</div>
<div class='tx' style='left:245.94px;top:1045px;font-size:32.0px;line-height:32.0px;font-weight:normal;color:#2a2a2a;-webkit-text-stroke:0.7px #ffffff;transform:scaleX(0.9446)'>9</div>
<div class='tx' style='left:721.77px;top:1045px;font-size:32.0px;line-height:32.0px;font-weight:normal;color:#2a2a2a;-webkit-text-stroke:0.7px #ffffff;transform:scaleX(0.9446)'>1134</div>
<div class='tx' style='left:801.13px;top:1045px;font-size:32.0px;line-height:32.0px;font-weight:normal;color:#2a2a2a;-webkit-text-stroke:0.7px #ffffff;transform:scaleX(0.9370)'>Mr N. THẾ ANH - L ráp</div>
<div class='tx' style='left:2262.26px;top:1045px;font-size:32.0px;line-height:32.0px;font-weight:normal;color:#2a2a2a;-webkit-text-stroke:0.7px #ffffff;transform:scaleX(0.9446)'>30/10/2018</div>
<div class='tx' style='left:228.94px;top:1087px;font-size:32.0px;line-height:32.0px;font-weight:normal;color:#2a2a2a;-webkit-text-stroke:0.7px #ffffff;transform:scaleX(0.9446)'>10</div>
<div class='tx' style='left:721.77px;top:1087px;font-size:32.0px;line-height:32.0px;font-weight:normal;color:#2a2a2a;-webkit-text-stroke:0.7px #ffffff;transform:scaleX(0.9446)'>1135</div>
<div class='tx' style='left:801.18px;top:1087px;font-size:32.0px;line-height:32.0px;font-weight:normal;color:#2a2a2a;-webkit-text-stroke:0.7px #ffffff;transform:scaleX(0.9078)'>Mr V. MẠNH DƯƠNG - L ráp</div>
<div class='tx' style='left:1919.06px;top:1087px;font-size:32.0px;line-height:32.0px;font-weight:normal;color:#2a2a2a;-webkit-text-stroke:0.7px #ffffff;transform:scaleX(0.9446)'>0</div>
<div class='tx' style='left:2262.26px;top:1087px;font-size:32.0px;line-height:32.0px;font-weight:normal;color:#2a2a2a;-webkit-text-stroke:0.7px #ffffff;transform:scaleX(0.9446)'>30/10/2018</div>
<div class='tx' style='left:231.77px;top:1129px;font-size:32.0px;line-height:32.0px;font-weight:normal;color:#2a2a2a;-webkit-text-stroke:0.7px #ffffff;transform:scaleX(0.9446)'>11</div>
<div class='tx' style='left:721.77px;top:1129px;font-size:32.0px;line-height:32.0px;font-weight:normal;color:#2a2a2a;-webkit-text-stroke:0.7px #ffffff;transform:scaleX(0.9446)'>1136</div>
<div class='tx' style='left:801.12px;top:1129px;font-size:32.0px;line-height:32.0px;font-weight:normal;color:#2a2a2a;-webkit-text-stroke:0.7px #ffffff;transform:scaleX(0.9418)'>Mr N. HỮU VỊ - L ráp</div>
<div class='tx' style='left:2262.26px;top:1129px;font-size:32.0px;line-height:32.0px;font-weight:normal;color:#2a2a2a;-webkit-text-stroke:0.7px #ffffff;transform:scaleX(0.9446)'>30/10/2018</div>
<div class='tx' style='left:229.89px;top:1171px;font-size:32.0px;line-height:32.0px;font-weight:normal;color:#2a2a2a;-webkit-text-stroke:0.7px #ffffff;transform:scaleX(0.9446)'>12</div>
<div class='tx' style='left:721.77px;top:1171px;font-size:32.0px;line-height:32.0px;font-weight:normal;color:#2a2a2a;-webkit-text-stroke:0.7px #ffffff;transform:scaleX(0.9446)'>1137</div>
<div class='tx' style='left:801.18px;top:1171px;font-size:32.0px;line-height:32.0px;font-weight:normal;color:#2a2a2a;-webkit-text-stroke:0.7px #ffffff;transform:scaleX(0.9081)'>Mr N. SỸ LẬP - Phay</div>
<div class='tx' style='left:1919.06px;top:1171px;font-size:32.0px;line-height:32.0px;font-weight:normal;color:#2a2a2a;-webkit-text-stroke:0.7px #ffffff;transform:scaleX(0.9446)'>0</div>
<div class='tx' style='left:2262.26px;top:1171px;font-size:32.0px;line-height:32.0px;font-weight:normal;color:#2a2a2a;-webkit-text-stroke:0.7px #ffffff;transform:scaleX(0.9446)'>30/10/2018</div>
<div class='tx' style='left:228.94px;top:1213px;font-size:32.0px;line-height:32.0px;font-weight:normal;color:#2a2a2a;-webkit-text-stroke:0.7px #ffffff;transform:scaleX(0.9446)'>13</div>
<div class='tx' style='left:721.77px;top:1213px;font-size:32.0px;line-height:32.0px;font-weight:normal;color:#2a2a2a;-webkit-text-stroke:0.7px #ffffff;transform:scaleX(0.9446)'>1138</div>
<div class='tx' style='left:801.14px;top:1213px;font-size:32.0px;line-height:32.0px;font-weight:normal;color:#2a2a2a;-webkit-text-stroke:0.7px #ffffff;transform:scaleX(0.9324)'>Mr N. VĂN NAM - Tiện</div>
<div class='tx' style='left:1919.06px;top:1213px;font-size:32.0px;line-height:32.0px;font-weight:normal;color:#2a2a2a;-webkit-text-stroke:0.7px #ffffff;transform:scaleX(0.9446)'>0</div>
<div class='tx' style='left:2262.26px;top:1213px;font-size:32.0px;line-height:32.0px;font-weight:normal;color:#2a2a2a;-webkit-text-stroke:0.7px #ffffff;transform:scaleX(0.9446)'>30/10/2018</div>
<div class='tx' style='left:228.94px;top:1255px;font-size:32.0px;line-height:32.0px;font-weight:normal;color:#2a2a2a;-webkit-text-stroke:0.7px #ffffff;transform:scaleX(0.9446)'>14</div>
<div class='tx' style='left:721.77px;top:1255px;font-size:32.0px;line-height:32.0px;font-weight:normal;color:#2a2a2a;-webkit-text-stroke:0.7px #ffffff;transform:scaleX(0.9446)'>1140</div>
<div class='tx' style='left:801.18px;top:1255px;font-size:32.0px;line-height:32.0px;font-weight:normal;color:#2a2a2a;-webkit-text-stroke:0.7px #ffffff;transform:scaleX(0.9106)'>Mr L. THANH TÙNG - CNC</div>
<div class='tx' style='left:2262.26px;top:1255px;font-size:32.0px;line-height:32.0px;font-weight:normal;color:#2a2a2a;-webkit-text-stroke:0.7px #ffffff;transform:scaleX(0.9446)'>01/11/2018</div>
<div class='tx' style='left:228.94px;top:1297px;font-size:32.0px;line-height:32.0px;font-weight:normal;color:#2a2a2a;-webkit-text-stroke:0.7px #ffffff;transform:scaleX(0.9446)'>15</div>
<div class='tx' style='left:721.77px;top:1297px;font-size:32.0px;line-height:32.0px;font-weight:normal;color:#2a2a2a;-webkit-text-stroke:0.7px #ffffff;transform:scaleX(0.9446)'>1141</div>
<div class='tx' style='left:801.19px;top:1297px;font-size:32.0px;line-height:32.0px;font-weight:normal;color:#2a2a2a;-webkit-text-stroke:0.7px #ffffff;transform:scaleX(0.9032)'>Mr N. VĂN HIỀN CNC</div>
<div class='tx' style='left:2262.26px;top:1297px;font-size:32.0px;line-height:32.0px;font-weight:normal;color:#2a2a2a;-webkit-text-stroke:0.7px #ffffff;transform:scaleX(0.9446)'>02/11/2018</div>
<div class='tx' style='left:228.94px;top:1339px;font-size:32.0px;line-height:32.0px;font-weight:normal;color:#2a2a2a;-webkit-text-stroke:0.7px #ffffff;transform:scaleX(0.9446)'>16</div>
<div class='tx' style='left:721.77px;top:1339px;font-size:32.0px;line-height:32.0px;font-weight:normal;color:#2a2a2a;-webkit-text-stroke:0.7px #ffffff;transform:scaleX(0.9446)'>1142</div>
<div class='tx' style='left:801.17px;top:1339px;font-size:32.0px;line-height:32.0px;font-weight:normal;color:#2a2a2a;-webkit-text-stroke:0.7px #ffffff;transform:scaleX(0.9172)'>Mr B. VĂN THẮNG</div>
<div class='tx' style='left:1919.06px;top:1339px;font-size:32.0px;line-height:32.0px;font-weight:normal;color:#2a2a2a;-webkit-text-stroke:0.7px #ffffff;transform:scaleX(0.9446)'>0</div>
<div class='tx' style='left:2262.26px;top:1339px;font-size:32.0px;line-height:32.0px;font-weight:normal;color:#2a2a2a;-webkit-text-stroke:0.7px #ffffff;transform:scaleX(0.9446)'>02/11/2018</div>
</body></html>
